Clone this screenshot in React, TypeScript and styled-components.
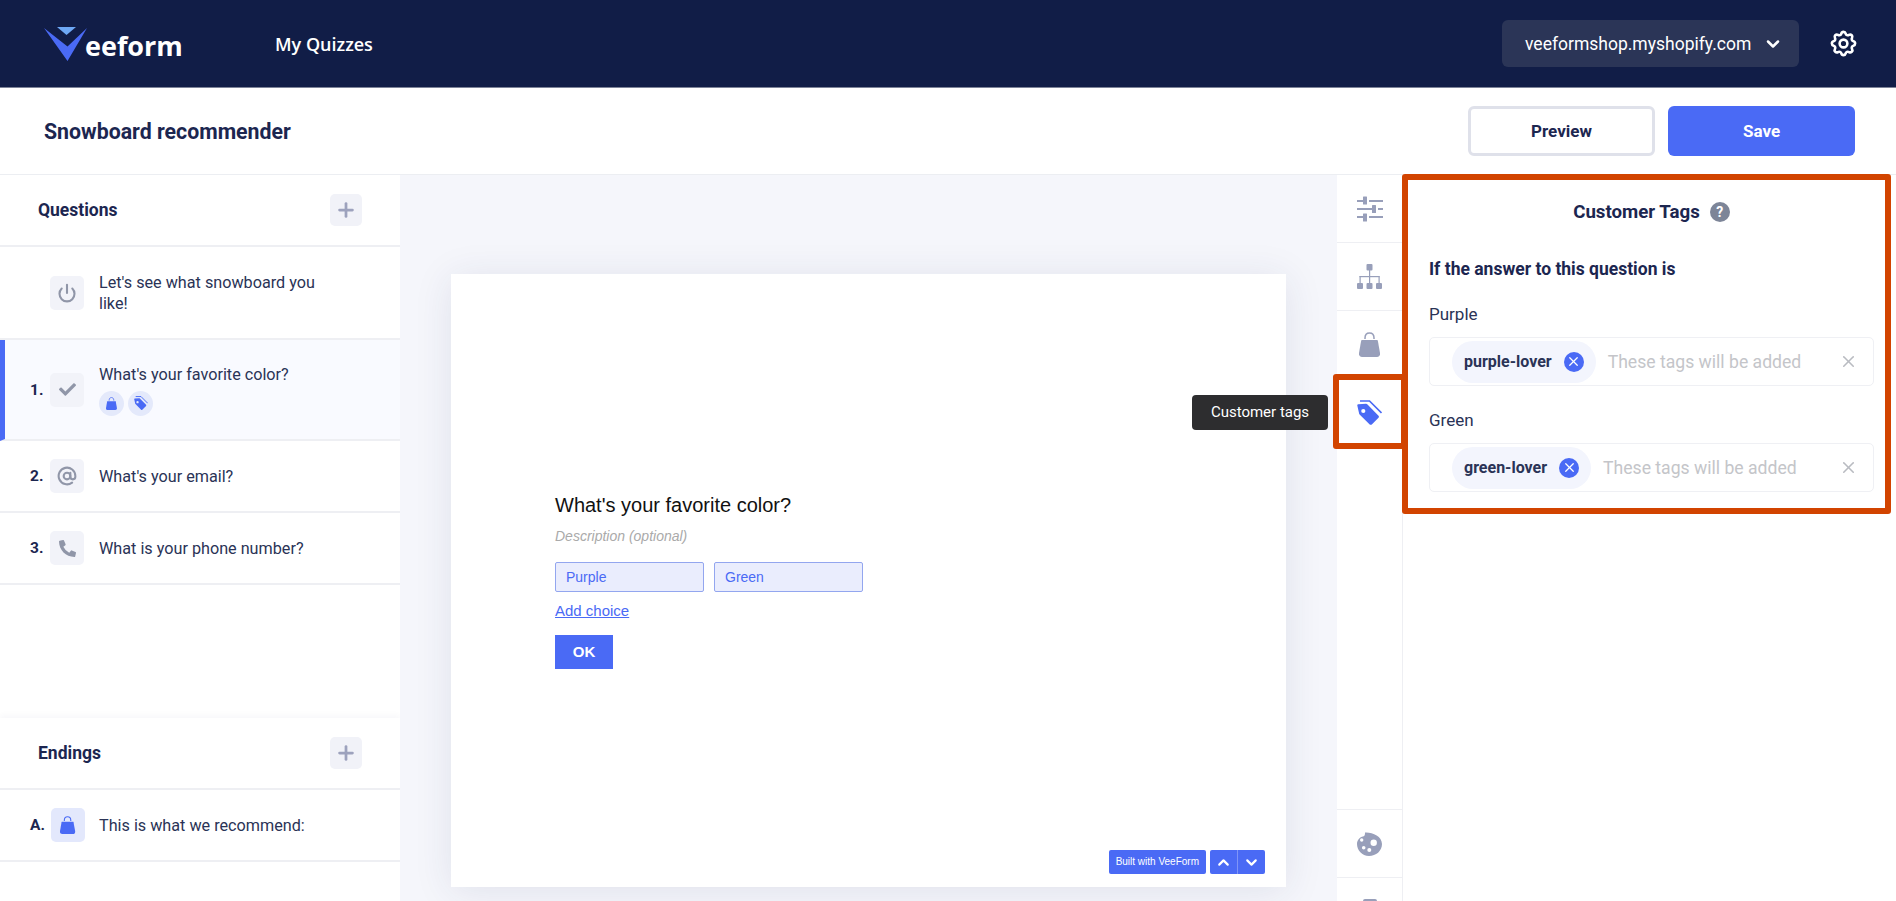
import React from 'react';
import styled, { createGlobalStyle } from 'styled-components';
import { FiAtSign, FiChevronDown, FiChevronUp, FiPlus, FiPower, FiX } from 'react-icons/fi';
import { FaCheck, FaPhoneAlt } from 'react-icons/fa';
import { HiOutlineCog } from 'react-icons/hi';

const GlobalStyle = createGlobalStyle`
  html, body {
    margin: 0;
    height: 100%;
    overflow: hidden;
    background: #fff;
    font-family: Roboto, "Liberation Sans", sans-serif;
    color: #1c2650;
  }
`;

const Page = styled.div`
  display: flex;
  flex-direction: column;
  height: 901px;
  overflow: hidden;
`;

const Header = styled.header`
  flex: none;
  display: flex;
  align-items: center;
  height: 87px;
  padding: 0 37px 0 44px;
  background: #111d47;
  border-bottom: 1px solid #7d8398;
`;

const Logo = styled.div`
  display: flex;
  align-items: center;
  width: 231px;
`;

const LogoText = styled.span`
  margin-left: -3px;
  padding-top: 3px;
  font-family: "Open Sans", sans-serif;
  font-size: 27px;
  font-weight: 700;
  color: #fff;
`;

const NavLink = styled.a`
  font-family: "Open Sans", sans-serif;
  font-size: 18px;
  font-weight: 600;
  color: #fff;
`;

const ShopSelect = styled.div`
  display: flex;
  align-items: center;
  justify-content: space-between;
  width: 297px;
  height: 47px;
  margin-left: auto;
  padding: 0 16px 0 23px;
  box-sizing: border-box;
  border-radius: 6px;
  background: #2b3557;
  font-size: 17.5px;
  color: #fff;
`;

const GearButton = styled.div`
  display: flex;
  margin-left: 29px;
  color: #fff;
`;

const SubHeader = styled.div`
  flex: none;
  display: flex;
  align-items: center;
  height: 86px;
  padding: 0 41px 0 44px;
  border-bottom: 1px solid #eceef2;
`;

const QuizTitle = styled.h1`
  margin: 0;
  font-size: 21.3px;
  font-weight: 700;
`;

const Actions = styled.div`
  display: flex;
  gap: 13px;
  margin-left: auto;
`;

const ActionButton = styled.button<{ $primary?: boolean }>`
  width: 187px;
  height: 50px;
  border-radius: 6px;
  border: ${(p) => (p.$primary ? 'none' : '3px solid #dfe1ea')};
  background: ${(p) => (p.$primary ? '#4a6af5' : '#fff')};
  color: ${(p) => (p.$primary ? '#fff' : '#1c2650')};
  font-family: inherit;
  font-size: 17px;
  font-weight: 700;
`;

const Workspace = styled.div`
  flex: 1;
  min-height: 0;
  display: grid;
  grid-template-columns: 400px 1fr 66px 493px;
`;

const Sidebar = styled.aside`
  display: flex;
  flex-direction: column;
  justify-content: space-between;
  min-height: 0;
`;

const Section = styled.section<{ $footer?: boolean }>`
  padding-bottom: ${(p) => (p.$footer ? '39px' : '0')};
  box-shadow: ${(p) => (p.$footer ? '0 -3px 6px rgba(30, 40, 80, 0.03)' : 'none')};
`;

const SectionHead = styled.div`
  display: flex;
  align-items: center;
  justify-content: space-between;
  height: 70px;
  padding: 0 38px;
  border-bottom: 2px solid #eeeff3;
`;

const SectionTitle = styled.h2`
  margin: 0;
  font-size: 17.5px;
  font-weight: 700;
`;

const AddButton = styled.div`
  display: flex;
  align-items: center;
  justify-content: center;
  width: 32px;
  height: 32px;
  border-radius: 5px;
  background: #f1f2f8;
  color: #9da2bd;
`;

const Row = styled.div<{ $active?: boolean; $tall?: boolean }>`
  display: flex;
  align-items: center;
  height: ${(p) => (p.$tall ? '91px' : p.$active ? '99px' : '70px')};
  padding: ${(p) => (p.$active ? '0 70px 0 25px' : '0 70px 0 30px')};
  border-left: ${(p) => (p.$active ? '5px solid #4a6af5' : 'none')};
  border-bottom: 2px solid #eeeff3;
  background: ${(p) => (p.$active ? '#f9faff' : '#fff')};
`;

const RowIndex = styled.span`
  flex: none;
  width: 20px;
  font-size: 15.5px;
  font-weight: 700;
`;

const RowIcon = styled.div<{ $accent?: boolean }>`
  flex: none;
  display: flex;
  align-items: center;
  justify-content: center;
  width: 34px;
  height: 34px;
  margin: ${(p) => (p.$accent ? '0 14px 0 1px' : '0 15px 0 0')};
  border-radius: 5px;
  background: ${(p) => (p.$accent ? '#e3e8fc' : '#f2f3f9')};
  color: ${(p) => (p.$accent ? '#4a6af5' : '#9096a8')};
`;

const RowBody = styled.div`
  font-size: 16.2px;
  line-height: 21px;
  color: #2a3356;
`;

const Badges = styled.div`
  display: flex;
  gap: 4px;
  margin-top: 6px;
`;

const Badge = styled.span`
  display: flex;
  align-items: center;
  justify-content: center;
  width: 25px;
  height: 25px;
  border-radius: 50%;
  background: #e4e9fb;
  color: #4a6af5;
`;

const Canvas = styled.main`
  display: flex;
  min-height: 0;
  padding: 99px 51px 14px;
  background: #f5f6fb;
`;

const PreviewCard = styled.div`
  position: relative;
  flex: 1;
  display: flex;
  flex-direction: column;
  justify-content: center;
  align-items: flex-start;
  padding-left: 104px;
  background: #fff;
  box-shadow: 0 4px 36px rgba(40, 50, 100, 0.1);
  font-family: "Liberation Sans", Arial, sans-serif;
`;

const PreviewQuestion = styled.div`
  font-size: 20px;
  line-height: 26px;
  color: #111;
`;

const PreviewDescription = styled.div`
  margin-top: 9px;
  font-size: 14px;
  line-height: 18px;
  font-style: italic;
  color: #aaa;
`;

const Choices = styled.div`
  display: flex;
  gap: 10px;
  margin-top: 17px;
`;

const Choice = styled.div`
  width: 149px;
  height: 30px;
  box-sizing: border-box;
  padding-left: 10px;
  border: 1px solid #93a6ef;
  border-radius: 2px;
  background: #eaedfd;
  color: #4a6af5;
  font-size: 14px;
  line-height: 28px;
`;

const AddChoice = styled.a`
  margin-top: 10px;
  font-size: 15px;
  line-height: 18px;
  color: #4a6af5;
  text-decoration: underline;
`;

const OkButton = styled.div`
  width: 58px;
  height: 34px;
  margin-top: 15px;
  background: #4a6af5;
  color: #fff;
  font-size: 15px;
  font-weight: 700;
  line-height: 34px;
  text-align: center;
`;

const Branding = styled.div`
  position: absolute;
  right: 21px;
  bottom: 13px;
  display: flex;
  gap: 4px;
`;

const BrandTag = styled.div`
  height: 24px;
  padding: 0 7px;
  border-radius: 2px;
  background: #4a6af5;
  color: #fff;
  font-size: 10px;
  line-height: 24px;
`;

const BrandArrows = styled.div`
  display: flex;
  border-radius: 2px;
  overflow: hidden;
  background: #4a6af5;
  color: #fff;
`;

const BrandArrow = styled.div`
  display: flex;
  align-items: center;
  justify-content: center;
  width: 27px;
  height: 24px;
  & + & {
    border-left: 1px solid #7f95f8;
  }
`;

const Rail = styled.nav`
  display: flex;
  flex-direction: column;
  min-height: 0;
  border-right: 1px solid #eeeff3;
  background: #fff;
`;

const RailCell = styled.div<{ $bottom?: boolean; $active?: boolean }>`
  position: relative;
  flex: none;
  display: flex;
  align-items: center;
  justify-content: center;
  height: 67px;
  margin-top: ${(p) => (p.$bottom ? 'auto' : '0')};
  border-top: ${(p) => (p.$bottom ? '1px solid #eeeff3' : 'none')};
  border-bottom: ${(p) => (p.$active ? 'none' : '1px solid #eeeff3')};
  color: ${(p) => (p.$active ? '#4a6af5' : '#989fba')};
`;

const RailOverflowCell = styled(RailCell)`
  margin-bottom: -45px;
`;

const Tooltip = styled.div`
  position: absolute;
  top: 16px;
  right: 74px;
  width: 136px;
  height: 35px;
  border-radius: 4px;
  background: #2d2d2f;
  color: #fff;
  font-size: 15px;
  line-height: 35px;
  text-align: center;
  white-space: nowrap;
`;

const Callout = styled.div<{ $inset: string; $height?: number }>`
  position: absolute;
  inset: ${(p) => p.$inset};
  height: ${(p) => (p.$height ? `${p.$height}px` : 'auto')};
  box-sizing: border-box;
  border: 6px solid #d24400;
  border-radius: 3px;
  pointer-events: none;
`;

const TagsPanel = styled.div`
  position: relative;
  padding: 0 22px 0 26px;
`;

const PanelHeading = styled.div`
  display: flex;
  align-items: center;
  justify-content: center;
  gap: 10px;
  height: 74px;
  font-size: 18.7px;
  font-weight: 700;
`;

const HelpDot = styled.span`
  display: flex;
  align-items: center;
  justify-content: center;
  width: 20px;
  height: 20px;
  border-radius: 50%;
  background: #7d8598;
  color: #fff;
  font-size: 14px;
  font-weight: 700;
`;

const RuleLabel = styled.div`
  margin-top: 9px;
  font-size: 17.5px;
  line-height: 22px;
  font-weight: 700;
`;

const AnswerLabel = styled.div`
  margin-top: 23px;
  font-size: 17px;
  line-height: 22px;
  color: #2a3356;
`;

const TagField = styled.div`
  display: flex;
  align-items: center;
  height: 49px;
  margin-top: 12px;
  padding: 0 15px 0 22px;
  box-sizing: border-box;
  border: 1px solid #eff0f4;
  border-radius: 5px;
`;

const Chip = styled.div`
  display: flex;
  align-items: center;
  gap: 12px;
  height: 42px;
  padding: 0 12px;
  border-radius: 21px;
  background: #f3f5fd;
  font-size: 16px;
  font-weight: 700;
  color: #2a3356;
`;

const ChipClose = styled.span`
  display: flex;
  align-items: center;
  justify-content: center;
  width: 20px;
  height: 20px;
  border-radius: 50%;
  background: #4a6af5;
  color: #fff;
`;

const Placeholder = styled.span`
  margin-left: 12px;
  font-size: 17.6px;
  color: #c4c5c9;
`;

const ClearIcon = styled.span`
  display: flex;
  margin-left: auto;
  color: #b9bbc1;
`;

const BagIcon = ({ height }: { height: number }) => (
  <svg width={(height * 21) / 25} height={height} viewBox="0 0 21 25" fill="currentColor">
    <path d="M6 7V6C6 2.800 8 1 10.500 1S15 2.800 15 6v1" fill="none" stroke="currentColor" strokeWidth="1.500" />
    <path d="M3 8h15c.4 0 .7.200.8.600L21 21c.4 2.300-.9 4-3 4H3c-2.100 0-3.400-1.700-3-4L2.200 8.600C2.300 8.200 2.600 8 3 8z" />
  </svg>
);

const TagIcon = ({ size }: { size: number }) => (
  <svg width={size} height={size} viewBox="0 0 25 25" fill="currentColor">
    <path
      fillRule="evenodd"
      d="M1.500 4.300 9 3.800c.6 0 1.100.2 1.500.6l11 11.300c.6.6.6 1.500 0 2.100l-6.700 6.600c-.6.600-1.500.600-2.100 0L2.600 14.500c-.4-.4-.6-.9-.6-1.500l-1.700-7.500c-.1-.7.500-1.200 1.200-1.200zM6.300 8.900a2.100 2.100 0 1 0 0 4.200 2.100 2.100 0 0 0 0-4.200z"
    />
    <path d="M3 1h9.500L24.500 13" fill="none" stroke="currentColor" strokeWidth="1.700" />
  </svg>
);

const PaletteIcon = () => (
  <svg width="25" height="24" viewBox="0 0 25 24" fill="currentColor">
    <path
      fillRule="evenodd"
      d="M8 .5C15 0 25 4 25 12c0 7-6 12-13 12C5 24 0 18 0 12c0-4 3-7 6-7.500C8 4 8 2 8 .5zM16.700 7.500a3.200 3.200 0 1 0 0 6.400 3.200 3.200 0 0 0 0-6.400zM4.700 6.300a1.700 1.700 0 1 0 0 3.400 1.700 1.700 0 0 0 0-3.400zM6.700 13.900a1.800 1.800 0 1 0 0 3.600 1.800 1.800 0 0 0 0-3.600zM12.300 16a2 2 0 1 0 0 4 2 2 0 0 0 0-4z"
    />
  </svg>
);

const SitemapIcon = () => (
  <svg width="25" height="25" viewBox="0 0 25 25" fill="currentColor">
    <rect x="9.500" y="0" width="6" height="6.500" rx="1" />
    <rect x="0" y="19" width="6" height="6" rx="1" />
    <rect x="9.500" y="19" width="6" height="6" rx="1" />
    <rect x="19" y="19" width="6" height="6" rx="1" />
    <rect x="12" y="6" width="1.200" height="13" />
    <rect x="2.500" y="12" width="20" height="1.200" />
    <rect x="2.500" y="12" width="1.200" height="7" />
    <rect x="21.500" y="12" width="1.200" height="7" />
  </svg>
);

const SlidersIcon = () => (
  <svg width="26" height="26" viewBox="0 0 26 26" fill="currentColor">
    <rect x="0" y="4" width="8" height="2" />
    <rect x="6" y="0.500" width="4" height="8" rx="0.500" />
    <rect x="12" y="4" width="14" height="2" />
    <rect x="0" y="12" width="15" height="2" />
    <rect x="15" y="9" width="4" height="8" rx="0.500" />
    <rect x="21" y="12" width="5" height="2" />
    <rect x="0" y="20" width="8" height="2" />
    <rect x="6" y="17.500" width="4" height="8" rx="0.500" />
    <rect x="12" y="20" width="14" height="2" />
  </svg>
);

const LogoMark = () => (
  <svg width="44" height="35" viewBox="0 0 44 35">
    <path d="M13 1h19l-9.500 8z" fill="#6ea8f5" />
    <path d="M0 2l23.500 18.500L43 2 23.500 35z" fill="#4a6af5" />
  </svg>
);

const PhonePreviewIcon = () => (
  <svg width="14" height="26" viewBox="0 0 14 26" fill="currentColor">
    <rect width="14" height="26" rx="2" />
  </svg>
);

function TagRow({ label, tag }: { label: string; tag: string }) {
  return (
    <>
      <AnswerLabel>{label}</AnswerLabel>
      <TagField>
        <Chip>
          {tag}
          <ChipClose>
            <FiX size={15} />
          </ChipClose>
        </Chip>
        <Placeholder>These tags will be added</Placeholder>
        <ClearIcon>
          <FiX size={19} />
        </ClearIcon>
      </TagField>
    </>
  );
}

export default function App(): JSX.Element {
  return (
    <Page>
      <GlobalStyle />
      <Header>
        <Logo>
          <LogoMark />
          <LogoText>eeform</LogoText>
        </Logo>
        <NavLink>My Quizzes</NavLink>
        <ShopSelect>
          veeformshop.myshopify.com
          <FiChevronDown size={20} strokeWidth={3} />
        </ShopSelect>
        <GearButton>
          <HiOutlineCog size={31} />
        </GearButton>
      </Header>
      <SubHeader>
        <QuizTitle>Snowboard recommender</QuizTitle>
        <Actions>
          <ActionButton>Preview</ActionButton>
          <ActionButton $primary>Save</ActionButton>
        </Actions>
      </SubHeader>
      <Workspace>
        <Sidebar>
          <Section>
            <SectionHead>
              <SectionTitle>Questions</SectionTitle>
              <AddButton>
                <FiPlus size={22} strokeWidth={3} />
              </AddButton>
            </SectionHead>
            <Row $tall>
              <RowIndex />
              <RowIcon>
                <FiPower size={20} strokeWidth={2.5} />
              </RowIcon>
              <RowBody>Let's see what snowboard you like!</RowBody>
            </Row>
            <Row $active>
              <RowIndex>1.</RowIndex>
              <RowIcon>
                <FaCheck size={17} />
              </RowIcon>
              <RowBody>
                What's your favorite color?
                <Badges>
                  <Badge>
                    <BagIcon height={13} />
                  </Badge>
                  <Badge>
                    <TagIcon size={14} />
                  </Badge>
                </Badges>
              </RowBody>
            </Row>
            <Row>
              <RowIndex>2.</RowIndex>
              <RowIcon>
                <FiAtSign size={20} strokeWidth={2.5} />
              </RowIcon>
              <RowBody>What's your email?</RowBody>
            </Row>
            <Row>
              <RowIndex>3.</RowIndex>
              <RowIcon>
                <FaPhoneAlt size={17} />
              </RowIcon>
              <RowBody>What is your phone number?</RowBody>
            </Row>
          </Section>
          <Section $footer>
            <SectionHead>
              <SectionTitle>Endings</SectionTitle>
              <AddButton>
                <FiPlus size={22} strokeWidth={3} />
              </AddButton>
            </SectionHead>
            <Row>
              <RowIndex>A.</RowIndex>
              <RowIcon $accent>
                <BagIcon height={18} />
              </RowIcon>
              <RowBody>This is what we recommend:</RowBody>
            </Row>
          </Section>
        </Sidebar>
        <Canvas>
          <PreviewCard>
            <PreviewQuestion>What's your favorite color?</PreviewQuestion>
            <PreviewDescription>Description (optional)</PreviewDescription>
            <Choices>
              <Choice>Purple</Choice>
              <Choice>Green</Choice>
            </Choices>
            <AddChoice>Add choice</AddChoice>
            <OkButton>OK</OkButton>
            <Branding>
              <BrandTag>Built with VeeForm</BrandTag>
              <BrandArrows>
                <BrandArrow>
                  <FiChevronUp size={17} strokeWidth={3} />
                </BrandArrow>
                <BrandArrow>
                  <FiChevronDown size={17} strokeWidth={3} />
                </BrandArrow>
              </BrandArrows>
            </Branding>
          </PreviewCard>
        </Canvas>
        <Rail>
          <RailCell>
            <SlidersIcon />
          </RailCell>
          <RailCell>
            <SitemapIcon />
          </RailCell>
          <RailCell>
            <BagIcon height={25} />
          </RailCell>
          <RailCell $active>
            <TagIcon size={25} />
            <Tooltip>Customer tags</Tooltip>
            <Callout $inset="-5px -5px -3px -4px" />
          </RailCell>
          <RailCell $bottom>
            <PaletteIcon />
          </RailCell>
          <RailOverflowCell>
            <PhonePreviewIcon />
          </RailOverflowCell>
        </Rail>
        <TagsPanel>
          <Callout $inset="-1px 5px auto -1px" $height={340} />
          <PanelHeading>
            Customer Tags
            <HelpDot>?</HelpDot>
          </PanelHeading>
          <RuleLabel>If the answer to this question is</RuleLabel>
          <TagRow label="Purple" tag="purple-lover" />
          <TagRow label="Green" tag="green-lover" />
        </TagsPanel>
      </Workspace>
    </Page>
  );
}
